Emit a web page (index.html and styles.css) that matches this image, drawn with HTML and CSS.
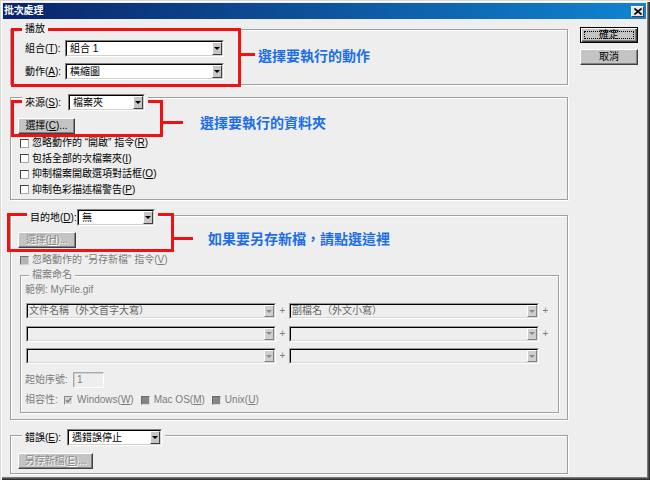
FILE: index.html
```html
<!DOCTYPE html>
<html lang="zh-Hant">
<head>
<meta charset="utf-8">
<title>批次處理</title>
<link rel="stylesheet" href="styles.css">
</head>
<body>
<div class="window">
  <div class="titlebar">
    <span class="title">批次處理</span>
    <span class="close"><svg width="8" height="7" viewBox="0 0 8 7"><path d="M0.5 0.5L7.5 6.5M7.5 0.5L0.5 6.5" stroke="#000" stroke-width="1.6" fill="none"/></svg></span>
  </div>
  <div class="content">
    <div class="main">
      <div class="group g-play">
        <div class="legend"><span>播放</span></div>
        <div class="row r1"><span class="lbl w40">組合(<u>T</u>):</span><div class="select s159"><div class="field"><span class="val">組合 1</span><span class="arrow"></span></div></div></div>
        <div class="row r2"><span class="lbl w40">動作(<u>A</u>):</span><div class="select s159"><div class="field"><span class="val">橫縮圖</span><span class="arrow"></span></div></div></div>
      </div>

      <div class="group g-src">
        <div class="legend"><span class="lbl w43">來源(<u>S</u>):</span><div class="select s77"><div class="field"><span class="val">檔案夾</span><span class="arrow"></span></div></div></div>
        <div class="btn b57">選擇(<u>C</u>)...</div>
        <div class="checks">
          <div class="crow"><span class="cb"></span><span>忽略動作的 “開啟” 指令(<u>R</u>)</span></div>
          <div class="crow"><span class="cb"></span><span>包括全部的次檔案夾(<u>I</u>)</span></div>
          <div class="crow"><span class="cb"></span><span>抑制檔案開啟選項對話框(<u>O</u>)</span></div>
          <div class="crow"><span class="cb"></span><span>抑制色彩描述檔警告(<u>P</u>)</span></div>
        </div>
      </div>

      <div class="group g-dst">
        <div class="legend"><span class="lbl w47">目的地(<u>D</u>):</span><div class="select s78"><div class="field"><span class="val">無</span><span class="arrow"></span></div></div></div>
        <div class="btn b58 dis">選擇(<u>H</u>)...</div>
        <div class="crow dst-check gray"><span class="cb cb-dis"></span><span>忽略動作的 “另存新檔” 指令(<u>V</u>)</span></div>
        <div class="group g-name">
          <div class="legend"><span>檔案命名</span></div>
          <div class="ex">範例: MyFile.gif</div>
          <div class="names">
            <div class="nrow">
              <div class="select off"><div class="field"><span class="val">文件名稱（外文首字大寫）</span><span class="arrow"></span></div></div>
              <span class="plus">+</span>
              <div class="select off"><div class="field"><span class="val">副檔名（外文小寫）</span><span class="arrow"></span></div></div>
              <span class="plus">+</span>
            </div>
            <div class="nrow">
              <div class="select off"><div class="field"><span class="val"></span><span class="arrow"></span></div></div>
              <span class="plus">+</span>
              <div class="select off"><div class="field"><span class="val"></span><span class="arrow"></span></div></div>
              <span class="plus">+</span>
            </div>
            <div class="nrow">
              <div class="select off"><div class="field"><span class="val"></span><span class="arrow"></span></div></div>
              <span class="plus">+</span>
              <div class="select off"><div class="field"><span class="val"></span><span class="arrow"></span></div></div>
            </div>
          </div>
          <div class="srow"><span class="lbl w48">起始序號:</span><span class="input">1</span></div>
          <div class="compat">
            <span class="lbl w39">相容性:</span>
            <span class="opt"><span class="cb cb-chk"><svg width="7" height="7" viewBox="0 0 7 7"><path d="M1 3.2l1.8 1.8L6 1.2" stroke="#7a7a7a" stroke-width="1.4" fill="none"/></svg></span><span>Windows(<u>W</u>)</span></span>
            <span class="opt"><span class="cb cb-dark"></span><span>Mac OS(<u>M</u>)</span></span>
            <span class="opt"><span class="cb cb-dark"></span><span>Unix(<u>U</u>)</span></span>
          </div>
        </div>
      </div>

      <div class="group g-err">
        <div class="legend"><span class="lbl w42">錯誤(<u>E</u>):</span><div class="select s95"><div class="field"><span class="val">遇錯誤停止</span><span class="arrow"></span></div></div></div>
        <div class="btn b75 dis">另存新檔(<u>E</u>)...</div>
      </div>
    </div>

    <div class="side">
      <div class="btn sbtn default">確定</div>
      <div class="btn sbtn">取消</div>
    </div>
  </div>

  <div class="redbox rb1"></div>
  <div class="redline rl1"></div>
  <div class="note n1">選擇要執行的動作</div>

  <div class="redbox rb2"></div>
  <div class="redline rl2"></div>
  <div class="note n2">選擇要執行的資料夾</div>

  <div class="redbox rb3"></div>
  <div class="redline rl3"></div>
  <div class="note n3">如果要另存新檔，請點選這裡</div>
</div>
</body>
</html>
```

FILE: styles.css
```css
html, body {
  margin: 0;
  padding: 0;
  background: #eeeeee;
}
body {
  font-family: "Liberation Sans", "Noto Sans CJK TC", sans-serif;
  font-size: 10px;
  line-height: 12px;
  color: #000;
}
.window {
  position: relative;
  width: 650px;
  height: 480px;
  box-sizing: border-box;
  padding: 3px 4px 4px 3px;
  background: #eeeeee;
  box-shadow: inset 1px 1px 0 #d8d8d8, inset 2px 2px 0 #ffffff,
    inset -1px -1px 0 #303030, inset -2px -2px 0 #505050, inset -3px -3px 0 #7a7a7a;
}
.titlebar {
  height: 16px;
  display: flex;
  align-items: center;
  justify-content: space-between;
  padding: 0 2px 0 1px;
  background: linear-gradient(to right, #0a246a, #1084d0);
  color: #fff;
}
.title {
  font-weight: bold;
  font-size: 10px;
  letter-spacing: -0.2px;
}
.close {
  width: 13px;
  height: 11px;
  box-sizing: border-box;
  background: #e4e4e4;
  border: 1px solid;
  border-color: #fff #404040 #404040 #fff;
  display: flex;
  align-items: center;
  justify-content: center;
}
.content {
  display: flex;
}
.main {
  width: 558px;
  margin-left: 7px;
  padding-top: 10px;
}
.side {
  width: 58px;
  margin-left: 12px;
  padding-top: 8px;
  display: flex;
  flex-direction: column;
  gap: 6px;
}

/* group boxes */
.group {
  box-sizing: border-box;
  border: 1px solid #a0a0a0;
  box-shadow: inset 1px 1px 0 #fff, 1px 1px 0 #fff;
}
.g-play { height: 56px; }
.g-src { height: 103px; margin-top: 12px; }
.g-dst { height: 205px; margin-top: 15px; }
.g-err { height: 39px; margin-top: 15px; }
.g-name {
  height: 138px;
  width: 539px;
  margin-top: 7px;
  margin-left: 9px;
  color: #7c7c7c;
}
.legend {
  position: relative;
  z-index: 2;
  display: flex;
  align-items: center;
  width: max-content;
  background: #eeeeee;
  padding: 0 3px;
  margin-left: 11px;
  margin-top: -7px;
}
.g-src .legend { margin-top: -4px; }
.g-dst > .legend { margin-left: 16px; }
.g-name .legend { margin-left: 8px; }

.row {
  display: flex;
  align-items: center;
  padding-left: 14px;
  height: 17px;
}
.r1 { margin-top: 5px; }
.r2 { margin-top: 6px; }
.lbl { flex: none; }
.w39 { width: 39px; }
.w40 { width: 40px; }
.w42 { width: 42px; }
.w43 { width: 43px; }
.w47 { width: 47px; }
.w48 { width: 48px; }

/* selects */
.select {
  box-sizing: border-box;
  height: 17px;
  display: flex;
  flex: none;
  border: 1px solid;
  border-color: #808080 #fff #fff #808080;
}
.s159 { width: 159px; }
.s77 { width: 77px; }
.s78 { width: 78px; }
.s95 { width: 95px; }
.field {
  flex: 1;
  display: flex;
  min-width: 0;
  background: #fff;
  border: 1px solid;
  border-color: #000 #d4d0c8 #d4d0c8 #000;
}
.val {
  flex: 1;
  min-width: 0;
  padding-left: 3px;
  line-height: 13px;
  white-space: nowrap;
  overflow: hidden;
}
.arrow {
  flex: none;
  width: 10px;
  box-sizing: border-box;
  background: #c6c6c6;
  border: 1px solid;
  border-color: #fff #404040 #404040 #fff;
  display: flex;
  align-items: center;
  justify-content: center;
}
.arrow::before {
  content: "";
  border-left: 3px solid transparent;
  border-right: 3px solid transparent;
  border-top: 3px solid #000;
}
.select.off { width: 250px; height: 16px; border-color: #9a9a9a #fff #fff #9a9a9a; }
.select.off .field { background: #eeeeee; border-color: #000 #d8d8d8 #d8d8d8 #000; }
.select.off .val { color: #666; line-height: 12px; padding-left: 1px; }
.select.off .arrow { background: #cfcfcf; border-color: #fff #808080 #808080 #fff; }
.select.off .arrow::before { border-top-color: #8a8a8a; }

/* buttons */
.btn {
  box-sizing: border-box;
  height: 16px;
  display: flex;
  align-items: center;
  justify-content: center;
  background: #c4c4c4;
  border: 1px solid;
  border-color: #fff #404040 #404040 #fff;
  box-shadow: inset -1px -1px 0 #808080;
  line-height: 12px;
  white-space: nowrap;
}
.b57 { width: 57px; margin: 7px 0 0 7px; }
.b58 { width: 58px; margin: 6px 0 0 7px; }
.b75 { width: 75px; margin: 7px 0 0 7px; }
.dis {
  color: #8a8a8a;
  text-shadow: 1px 1px 0 #fff;
}
.sbtn { width: 58px; }
.btn.default {
  position: relative;
  border-color: #000;
  box-shadow: inset 1px 1px 0 #fff, inset -1px -1px 0 #404040, inset -2px -2px 0 #808080;
}
.btn.default::after {
  content: "";
  position: absolute;
  inset: 3px 3px 3px 3px;
  border: 1px dotted #000;
}

/* checkboxes */
.checks { margin-top: 1.5px; }
.crow {
  display: flex;
  align-items: center;
  height: 15.5px;
  padding-left: 9px;
  white-space: nowrap;
}
.dst-check { height: 16px; margin-top: 4px; }
.gray { color: #7c7c7c; }
.cb {
  flex: none;
  width: 9px;
  height: 9px;
  box-sizing: border-box;
  margin-right: 3px;
  background: #fff;
  border: 1px solid;
  border-color: #404040 #a8a8a8 #a8a8a8 #404040;
  display: flex;
  align-items: center;
  justify-content: center;
}
.cb-dis { background: #b4b4b4; border-color: #707070 #d0d0d0 #d0d0d0 #707070; }
.cb-chk { background: #d6d6d6; border-color: #8a8a8a #f4f4f4 #f4f4f4 #8a8a8a; }
.cb-dark { background: #858585; border-color: #6a6a6a #dcdcdc #dcdcdc #6a6a6a; }

/* naming group */
.ex {
  margin-top: 3px;
  padding-left: 4px;
  height: 12px;
}
.names {
  margin-top: 7px;
  display: flex;
  flex-direction: column;
  gap: 6.5px;
}
.nrow {
  display: flex;
  align-items: center;
  height: 16px;
  padding-left: 5px;
}
.plus {
  flex: none;
  width: 13px;
  text-align: center;
  color: #7c7c7c;
}
.srow {
  display: flex;
  align-items: center;
  height: 16px;
  margin-top: 8px;
  padding-left: 4px;
}
.input {
  box-sizing: border-box;
  width: 31px;
  height: 16px;
  padding-left: 3px;
  line-height: 14px;
  border: 1px solid;
  border-color: #a8a8a8 #fff #fff #a8a8a8;
  box-shadow: inset 1px 1px 0 #d0d0d0;
  color: #808080;
}
.compat {
  display: flex;
  align-items: center;
  height: 12px;
  margin-top: 6px;
  padding-left: 4px;
  white-space: nowrap;
}
.opt {
  display: flex;
  align-items: center;
  margin-right: 7px;
}
.opt .cb { margin-right: 4px; }

/* annotations */
.redbox {
  position: absolute;
  z-index: 1;
  box-sizing: border-box;
  border: 3px solid #f01212;
}
.rb1 { left: 11px; top: 28px; width: 230px; height: 59px; }
.rb2 { left: 11px; top: 100px; width: 152px; height: 37px; }
.rb3 { left: 7px; top: 213px; width: 167px; height: 39px; }
.redline {
  position: absolute;
  z-index: 1;
  height: 3px;
  background: #f01212;
}
.rl1 { left: 240px; top: 53px; width: 15px; }
.rl2 { left: 163px; top: 121px; width: 20px; }
.rl3 { left: 174px; top: 237px; width: 19px; }
.note {
  position: absolute;
  z-index: 3;
  font-family: "Noto Sans CJK TC", sans-serif;
  font-weight: bold;
  font-size: 14px;
  line-height: 16px;
  color: #1b6ee8;
  white-space: nowrap;
}
.n1 { left: 258px; top: 47px; }
.n2 { left: 200px; top: 114px; }
.n3 { left: 208px; top: 230px; }
```
